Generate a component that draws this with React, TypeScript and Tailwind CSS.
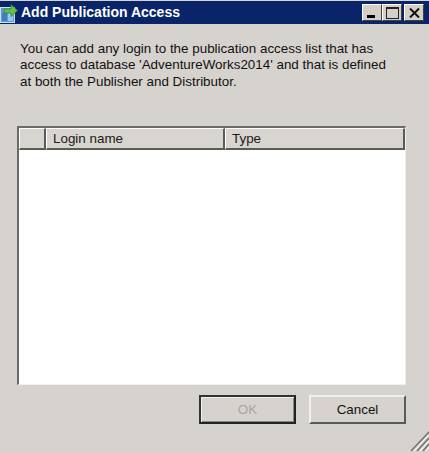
import React from 'react'

function TitleIcon() {
  return (
    <svg width="18" height="20" viewBox="0 0 18 20" className="shrink-0">
      <rect x="0.5" y="4.5" width="14" height="15" fill="#5b9bd8" stroke="#cfe0f2" />
      <rect x="2" y="10" width="5" height="8" fill="#3f7fc4" />
      <rect x="8" y="10" width="5" height="8" fill="#9cc6ec" />
      <path d="M4 6h7V1.500L17.500 7.500 11 13.500V10H4z" fill="#63c04a" stroke="#2e7d22" strokeWidth="0.7" />
    </svg>
  )
}

function WinButton({ children }: { children: React.ReactNode }) {
  return (
    <div className="flex h-[17px] w-[20px] items-center justify-center border border-t-white border-l-white border-r-[#404040] border-b-[#404040] bg-[#d4d0c8]">
      {children}
    </div>
  )
}

function HeaderCell({ className, children }: { className: string; children?: React.ReactNode }) {
  return (
    <div className={`flex h-[22px] items-center border-t border-l border-t-white border-l-white border-r-2 border-b-2 border-r-[#5a5a5a] border-b-[#5a5a5a] bg-[#d8d4cf] pt-[2px] pl-[6px] text-[13.4px] text-[#1a1a1a] ${className}`}>
      {children}
    </div>
  )
}

export default function App() {
  return (
    <div className="relative flex h-[453px] w-[429px] flex-col overflow-hidden bg-[#d6d3ce] font-['Liberation_Sans',Arial,sans-serif]">
      {/* Title bar */}
      <div className="mt-px flex h-[23px] items-center justify-between bg-[#0a246a] pr-[5px]">
        <div className="flex items-center gap-[3px]">
          <TitleIcon />
          <span className="text-[14px] font-bold text-white">Add Publication Access</span>
        </div>
        <div className="flex items-center">
          <WinButton>
            <span className="mt-[8px] mr-[3px] h-[3px] w-[8px] bg-black" />
          </WinButton>
          <div className="mr-[2px]">
            <WinButton>
              <span className="h-[12px] w-[13px] border border-t-2 border-[#222]" />
            </WinButton>
          </div>
          <WinButton>
            <svg width="11" height="10" viewBox="0 0 11 10">
              <path d="M1 0.500L10 9.500M10 0.500L1 9.500" stroke="#111" strokeWidth="2" />
            </svg>
          </WinButton>
        </div>
      </div>

      {/* Description */}
      <p className="mt-[17px] ml-[20px] w-[395px] text-[13.4px] leading-[16.3px] text-[#111]">
        You can add any login to the publication access list that has
        <br />
        access to database 'AdventureWorks2014' and that is defined
        <br />
        at both the Publisher and Distributor.
      </p>

      {/* Login table */}
      <div className="mt-[36px] ml-[17px] flex h-[259px] w-[389px] flex-col border-t-2 border-l-2 border-r border-b border-t-[#6b6b6b] border-l-[#6b6b6b] border-r-[#f2f0ec] border-b-[#f2f0ec] bg-white">
        <div className="flex">
          <HeaderCell className="w-[27px]" />
          <HeaderCell className="w-[179px]">Login name</HeaderCell>
          <HeaderCell className="flex-1">Type</HeaderCell>
        </div>
      </div>

      {/* Buttons */}
      <div className="mt-[10px] ml-[199px] flex gap-[13px]">
        <button className="h-[29px] w-[97px] border-2 border-t-[#333] border-l-[#333] border-r-[#222] border-b-[#222] bg-[#d6d3ce] pt-[2px] text-[13.4px] text-[#a9a6a0] shadow-[inset_1px_1px_0_#f4f2ee,inset_-1px_-1px_0_#8a8884]">
          OK
        </button>
        <button className="h-[29px] w-[97px] border-2 border-t-[#f2f0ec] border-l-[#f2f0ec] border-r-[#5a5a5a] border-b-[#5a5a5a] bg-[#d6d3ce] pt-[2px] text-[13.4px] text-[#111]">
          Cancel
        </button>
      </div>

      {/* Resize grip */}
      <svg width="20" height="21" viewBox="0 0 20 21" className="absolute right-0 bottom-px">
        <path d="M20 1L2 20M20 7L8 20M20 13L14 20" stroke="#77756f" strokeWidth="1.600" />
        <path d="M20 3.500L5 20M20 9.500L11 20M20 15.500L17 20" stroke="#ffffff" strokeWidth="1" />
      </svg>
    </div>
  )
}
